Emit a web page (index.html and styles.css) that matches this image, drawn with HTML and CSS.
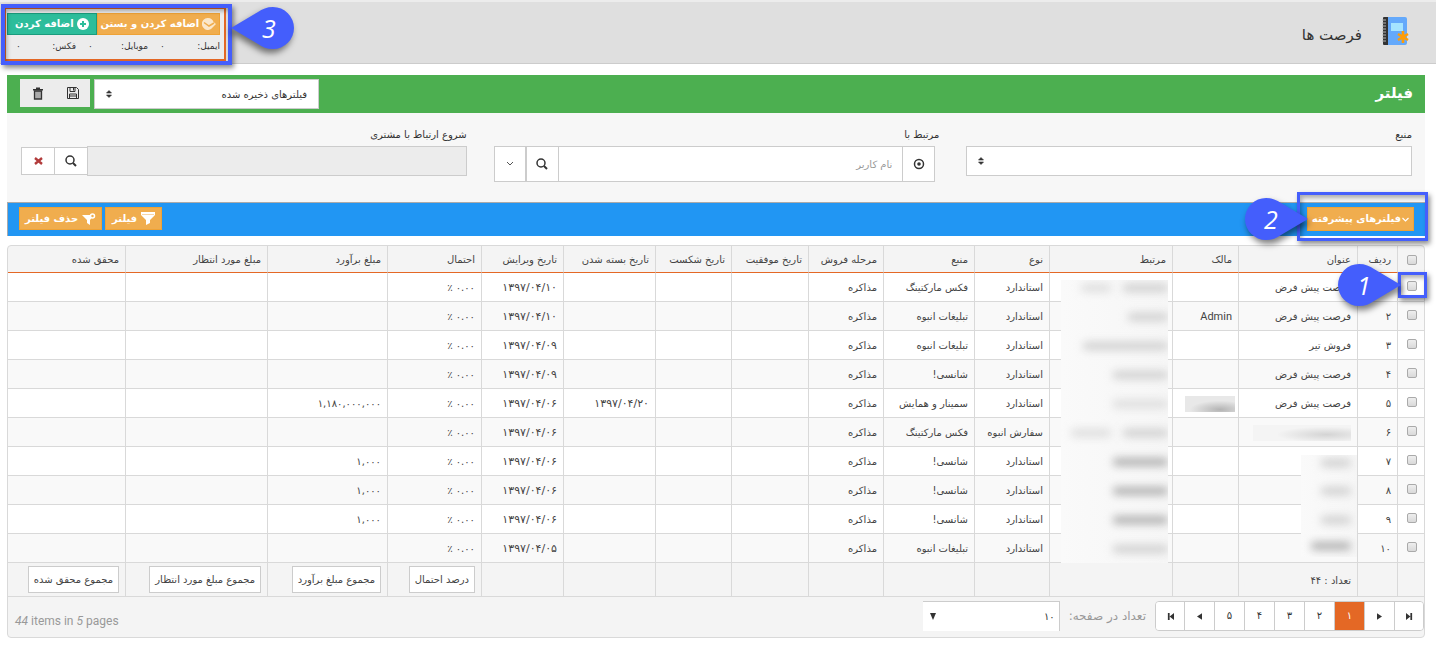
FILE: index.html
```html
<!DOCTYPE html>
<html lang="fa" dir="rtl">
<head>
<meta charset="utf-8">
<title>فرصت ها</title>
<link rel="stylesheet" href="styles.css">
</head>
<body>
<svg class="defs" width="0" height="0" aria-hidden="true">
  <symbol id="drop" viewBox="0 0 63 42"><path d="M63 21 36 5C32 2 27 0 21 0a21 21 0 0 0 0 42c6 0 11-2 15-5z"/></symbol>
  <symbol id="search" viewBox="0 0 12 12"><circle cx="5" cy="5" r="4" fill="none" stroke="currentColor" stroke-width="1.5"/><path d="m8 8 3 3" stroke="currentColor" stroke-width="2"/></symbol>
  <symbol id="sort" viewBox="0 0 8 10"><path d="M1.500 4h5L4 1.500zM1.500 6h5L4 8.500z" fill="currentColor" stroke="currentColor" stroke-width=".6" stroke-linejoin="round"/></symbol>
</svg>

<header class="top">
  <div class="brand">
    <svg class="book" viewBox="0 0 27 29" aria-hidden="true">
      <path d="M5 0h18a2 2 0 0 1 2 2v24a2 2 0 0 1-2 2H5z" fill="#64a9fb"/>
      <path d="M2 0h4v28H2a1 1 0 0 1-1-1V1a1 1 0 0 1 1-1z" fill="#333"/>
      <path d="M0 3h4M0 6h4M0 9h4M0 12h4M0 15h4M0 18h4M0 21h4M0 24h4" stroke="#b5b5b5"/>
      <path d="M9 6h12v8H9z" fill="#a5e4ff"/>
      <path d="M21 14v12M16 17l10 6M26 17l-10 6" stroke="#ff9c05" stroke-width="2.6"/>
    </svg>
    <h1 class="title">فرصت ها</h1>
  </div>
  <div class="quick">
    <div class="quick-buttons">
      <button class="btn amber" type="button"><svg width="14" height="12" viewBox="0 0 14 12" aria-hidden="true"><path d="M6 0c3 0 5 2 5.500 4L14 6l-5 5-1 .6A6 6 0 1 1 6 0z" fill="#fff" opacity=".7"/><path d="M2 4.500 7 8l5-3" stroke="#f0ad4e" stroke-width="1.500" fill="none"/></svg>اضافه کردن و بستن</button>
      <button class="btn teal" type="button"><svg width="12" height="12" viewBox="0 0 12 12" aria-hidden="true"><circle cx="6" cy="6" r="6" fill="#fff"/><path d="M6 3v6M3 6h6" stroke="#2dbd9b" stroke-width="2"/></svg>اضافه کردن</button>
    </div>
    <div class="quick-info"><span>ایمیل:<b>۰</b></span><span>موبایل:<b>۰</b></span><span>فکس:<b>۰</b></span></div>
    <div class="mark mark-3"></div>
    <div class="pin pin-3"><svg aria-hidden="true"><use href="#drop"/></svg><span>3</span></div>
  </div>
</header>

<main class="page">
  <section class="filter">
    <div class="filter-head">
      <h2>فیلتر</h2>
      <div class="saved">
        <div class="select-wrap"><select class="field" aria-label="فیلترهای ذخیره شده"><option>فیلترهای ذخیره شده</option></select><svg class="sort" aria-hidden="true"><use href="#sort"/></svg></div>
        <div class="tools">
          <button type="button" aria-label="ذخیره"><svg width="12" height="12" viewBox="0 0 12 12" fill="none" stroke="#333" aria-hidden="true"><path d="M.5.5h9l2 2v9H.5z"/><path d="M3 .5v4h5v-4M6.500 1v2.500M2.500 11.500V7h7v4.500M2.500 9h7"/></svg></button>
          <button type="button" aria-label="حذف"><svg width="12" height="13" viewBox="0 0 12 13" aria-hidden="true"><path d="M1 2h10v1.500H1zM4 .5h4V2H4z" fill="#333"/><path d="M2.500 4h7v8h-7z" fill="#aaa" stroke="#333" stroke-width="1.300"/></svg></button>
        </div>
      </div>
    </div>
    <div class="filter-body">
      <div class="cell">
        <label for="source">منبع</label>
        <div class="select-wrap"><select class="field" id="source"><option></option></select><svg class="sort" aria-hidden="true"><use href="#sort"/></svg></div>
      </div>
      <div class="cell">
        <label for="related">مرتبط با</label>
        <div class="group">
          <button type="button" aria-label="انتخاب"><svg width="12" height="12" viewBox="0 0 12 12" aria-hidden="true"><circle cx="6" cy="6" r="4.500" fill="none" stroke="#333" stroke-width="1.500"/><circle cx="6" cy="6" r="1.800" fill="#333"/></svg></button>
          <input id="related" type="text" placeholder="نام کاربر">
          <button type="button" aria-label="جستجو"><svg width="12" height="12" aria-hidden="true"><use href="#search"/></svg></button>
          <button class="split" type="button" aria-label="باز کردن"><svg width="8" height="6" viewBox="0 0 8 6" aria-hidden="true"><path d="m1 1 3 3 3-3" fill="none" stroke="#555"/></svg></button>
        </div>
      </div>
      <div class="cell">
        <label for="start">شروع ارتباط با مشتری</label>
        <div class="group low">
          <input id="start" type="text" disabled>
          <button type="button" aria-label="جستجو"><svg width="12" height="12" aria-hidden="true"><use href="#search"/></svg></button>
          <button type="button" aria-label="پاک کردن"><svg width="9" height="8" viewBox="0 0 9 8" aria-hidden="true"><path d="m1 1 7 6M8 1 1 7" stroke="#b23c3c" stroke-width="2.400"/></svg></button>
        </div>
      </div>
    </div>
    <div class="filter-foot">
      <div class="advanced">
        <button class="btn amber" type="button"><svg width="7" height="5" viewBox="0 0 7 5" aria-hidden="true"><path d="m.5 1 3 3 3-3" fill="none" stroke="#fff" stroke-width="1.200"/></svg>فیلترهای پیشرفته</button>
        <div class="mark mark-2"></div>
        <div class="pin pin-2"><svg aria-hidden="true"><use href="#drop"/></svg><span>2</span></div>
      </div>
      <div class="actions">
        <button class="btn amber" type="button"><svg width="14" height="13" viewBox="0 0 14 13" aria-hidden="true"><path d="M0 0h14v3L9 8v3l-4 2V8L0 3z" fill="#fff"/><path d="M1 2.500h12" stroke="#f0ad4e" stroke-width=".5"/></svg>فیلتر</button>
        <button class="btn amber" type="button"><svg width="14" height="12" viewBox="0 0 14 12" aria-hidden="true"><path d="M0 2h12L8 7v5l-3-2V7z" fill="#fff"/><circle cx="10.500" cy="3" r="2" fill="#f0ad4e" stroke="#fff" stroke-width="1.500"/></svg>حذف فیلتر</button>
      </div>
    </div>
  </section>

  <section class="grid">
    <table>
      <colgroup><col class="w27"><col class="w40"><col class="w119"><col class="w66"><col class="w123"><col class="w75"><col class="w91"><col class="w75"><col class="w77"><col class="w76"><col class="w92"><col class="w82"><col class="w94"><col class="w120"><col class="w142"><col class="w117"></colgroup>
      <thead><tr><th><input type="checkbox" aria-label="انتخاب همه"></th><th>ردیف</th><th>عنوان</th><th>مالک</th><th>مرتبط</th><th>نوع</th><th>منبع</th><th>مرحله فروش</th><th>تاریخ موفقیت</th><th>تاریخ شکست</th><th>تاریخ بسته شدن</th><th>تاریخ ویرایش</th><th>احتمال</th><th>مبلغ برآورد</th><th>مبلغ مورد انتظار</th><th>محقق شده</th></tr></thead>
      <tbody>
        <tr><td class="anchor"><input type="checkbox" aria-label="ردیف ۱"><div class="mark mark-1"></div><div class="pin pin-1"><svg aria-hidden="true"><use href="#drop"/></svg><span>1</span></div></td><td>۱</td><td>فرصت پیش فرض</td><td></td><td class="anchor"><div class="veil first"><i class="s45"></i><i class="s30 pale"></i></div></td><td>استاندارد</td><td>فکس مارکتینگ</td><td>مذاکره</td><td></td><td></td><td></td><td>۱۳۹۷/۰۴/۱۰</td><td>۰.۰۰ ٪</td><td></td><td></td><td></td></tr>
        <tr><td><input type="checkbox" aria-label="ردیف ۲"></td><td>۲</td><td>فرصت پیش فرض</td><td class="latin">Admin</td><td class="anchor"><div class="veil"><i class="s40"></i></div></td><td>استاندارد</td><td>تبلیغات انبوه</td><td>مذاکره</td><td></td><td></td><td></td><td>۱۳۹۷/۰۴/۱۰</td><td>۰.۰۰ ٪</td><td></td><td></td><td></td></tr>
        <tr><td><input type="checkbox" aria-label="ردیف ۳"></td><td>۳</td><td>فروش تیر</td><td></td><td class="anchor"><div class="veil"><i class="s85"></i></div></td><td>استاندارد</td><td>تبلیغات انبوه</td><td>مذاکره</td><td></td><td></td><td></td><td>۱۳۹۷/۰۴/۰۹</td><td>۰.۰۰ ٪</td><td></td><td></td><td></td></tr>
        <tr><td><input type="checkbox" aria-label="ردیف ۴"></td><td>۴</td><td>فرصت پیش فرض</td><td></td><td class="anchor"><div class="veil"><i class="s55"></i></div></td><td>استاندارد</td><td>شانسی!</td><td>مذاکره</td><td></td><td></td><td></td><td>۱۳۹۷/۰۴/۰۹</td><td>۰.۰۰ ٪</td><td></td><td></td><td></td></tr>
        <tr><td><input type="checkbox" aria-label="ردیف ۵"></td><td>۵</td><td>فرصت پیش فرض</td><td class="tight"><div class="patch owner"></div></td><td class="anchor"><div class="veil"><i class="s55 pale"></i></div></td><td>استاندارد</td><td>سمینار و همایش</td><td>مذاکره</td><td></td><td></td><td>۱۳۹۷/۰۴/۲۰</td><td>۱۳۹۷/۰۴/۰۶</td><td>۰.۰۰ ٪</td><td>۱,۱۸۰,۰۰۰,۰۰۰</td><td></td><td></td></tr>
        <tr><td><input type="checkbox" aria-label="ردیف ۶"></td><td>۶</td><td><div class="patch name"></div></td><td></td><td class="anchor"><div class="veil"><i class="s45"></i><i class="s40 pale"></i></div></td><td>سفارش انبوه</td><td>فکس مارکتینگ</td><td>مذاکره</td><td></td><td></td><td></td><td>۱۳۹۷/۰۴/۰۶</td><td>۰.۰۰ ٪</td><td></td><td></td><td></td></tr>
        <tr><td><input type="checkbox" aria-label="ردیف ۷"></td><td>۷</td><td class="anchor"><div class="veil short first"><i class="s30"></i></div></td><td></td><td class="anchor"><div class="veil"><i class="s55 dark"></i></div></td><td>استاندارد</td><td>شانسی!</td><td>مذاکره</td><td></td><td></td><td></td><td>۱۳۹۷/۰۴/۰۶</td><td>۰.۰۰ ٪</td><td>۱,۰۰۰</td><td></td><td></td></tr>
        <tr><td><input type="checkbox" aria-label="ردیف ۸"></td><td>۸</td><td class="anchor"><div class="veil short"><i class="s30"></i></div></td><td></td><td class="anchor"><div class="veil"><i class="s55 dark"></i></div></td><td>استاندارد</td><td>شانسی!</td><td>مذاکره</td><td></td><td></td><td></td><td>۱۳۹۷/۰۴/۰۶</td><td>۰.۰۰ ٪</td><td>۱,۰۰۰</td><td></td><td></td></tr>
        <tr><td><input type="checkbox" aria-label="ردیف ۹"></td><td>۹</td><td class="anchor"><div class="veil short"><i class="s30"></i></div></td><td></td><td class="anchor"><div class="veil"><i class="s55 dark"></i></div></td><td>استاندارد</td><td>شانسی!</td><td>مذاکره</td><td></td><td></td><td></td><td>۱۳۹۷/۰۴/۰۶</td><td>۰.۰۰ ٪</td><td>۱,۰۰۰</td><td></td><td></td></tr>
        <tr><td><input type="checkbox" aria-label="ردیف ۱۰"></td><td>۱۰</td><td class="anchor"><div class="veil short last"><i class="s40 dark"></i></div></td><td></td><td class="anchor"><div class="veil"><i class="s55"></i></div></td><td>استاندارد</td><td>تبلیغات انبوه</td><td>مذاکره</td><td></td><td></td><td></td><td>۱۳۹۷/۰۴/۰۵</td><td>۰.۰۰ ٪</td><td></td><td></td><td></td></tr>
      </tbody>
      <tfoot><tr><td></td><td></td><td>تعداد : ۴۴</td><td></td><td></td><td></td><td></td><td></td><td></td><td></td><td></td><td></td><td><button type="button">درصد احتمال</button></td><td><button type="button">مجموع مبلغ برآورد</button></td><td><button type="button">مجموع مبلغ مورد انتظار</button></td><td><button type="button">مجموع محقق شده</button></td></tr></tfoot>
    </table>
    <div class="pager">
      <nav class="pages" aria-label="صفحه‌ها">
        <button type="button" aria-label="آخرین صفحه"><svg width="7" height="7" viewBox="0 0 8 8" aria-hidden="true"><path d="M0 0l5 4-5 4zM5 0h2v8H5z" fill="#333"/></svg></button>
        <button type="button" aria-label="صفحه بعد"><svg width="5" height="7" viewBox="0 0 6 8" aria-hidden="true"><path d="M0 0l6 4-6 4z" fill="#333"/></svg></button>
        <button class="current" type="button">۱</button>
        <button type="button">۲</button>
        <button type="button">۳</button>
        <button type="button">۴</button>
        <button type="button">۵</button>
        <button type="button" aria-label="صفحه قبل"><svg width="5" height="7" viewBox="0 0 6 8" aria-hidden="true"><path d="M6 0 0 4l6 4z" fill="#333"/></svg></button>
        <button type="button" aria-label="اولین صفحه"><svg width="7" height="7" viewBox="0 0 8 8" aria-hidden="true"><path d="M8 0 3 4l5 4zM1 0h2v8H1z" fill="#333"/></svg></button>
      </nav>
      <label class="per-label" for="per">تعداد در صفحه:</label>
      <div class="per"><select id="per"><option>۱۰</option></select><svg width="6" height="7" viewBox="0 0 6 7" aria-hidden="true"><path d="M0 0h6L3 7z" fill="#333"/></svg></div>
      <p class="summary" dir="ltr"><em>44</em> items in <em>5</em> pages</p>
    </div>
  </section>
</main>
</body>
</html>
```

FILE: styles.css
```css
* { box-sizing: border-box; }

body {
  margin: 0;
  background: #fff;
  color: #333;
  font-family: "DejaVu Sans", sans-serif;
  font-size: 10px;
  line-height: 16px;
}

.defs { position: absolute; }

button, input, select { margin: 0; font: inherit; color: inherit; border-radius: 0; }

button {
  display: inline-flex;
  align-items: center;
  justify-content: center;
  padding: 0;
  border: 0;
  background: #fff;
  cursor: pointer;
}

h1, h2, p { margin: 0; font-weight: normal; }

/* Header */
.top {
  display: flex;
  justify-content: space-between;
  align-items: flex-start;
  min-height: 64px;
  padding: 5px 27px 0 4px;
  border-top: 2px solid #ececec;
  border-bottom: 1px solid #ccc;
  background: #dfdfdf;
}

.brand { display: flex; align-items: center; gap: 20px; padding-top: 8px; }
.book { width: 27px; height: 29px; }
.title { padding-top: 8px; font-size: 15px; line-height: 24px; }

.quick {
  position: relative;
  width: 222px;
  padding: 4px 4px 0 1px;
  border: 2px solid #e46825;
  background: #ececec;
}

.quick-buttons { display: flex; }
.quick-buttons .btn { gap: 3px; padding: 0 2px; }
.quick-buttons .amber { flex: 7; }
.quick-buttons .teal { flex: 5; }

.btn {
  gap: 4px;
  height: 22px;
  padding: 0 5px;
  border: 1px solid #eea236;
  background: #f0ad4e;
  color: #fff;
  font-weight: bold;
  white-space: nowrap;
}
.btn.teal { border-color: #1a9c7d; background: #2dbd9b; }

.quick-info { display: flex; justify-content: space-between; gap: 12px; padding: 3px 0 5px 9px; font-size: 9px; }
.quick-info span { display: flex; flex: 1; justify-content: space-between; }
.quick-info b { font-weight: normal; }

/* Numbered callouts */
.mark {
  position: absolute;
  z-index: 2;
  border: 4px solid #445efc;
  box-shadow: 2px 3px 5px rgba(0, 0, 0, .45), inset 2px 3px 4px rgba(0, 0, 0, .3);
  pointer-events: none;
}
.mark-1 { inset: -1px -3px 3px 0; border-width: 3px; }
.mark-2 { inset: -15px -14px -10px -10px; border-width: 3px; }
.mark-3 { inset: -5px -8px -6px -5px; }

.pin {
  position: absolute;
  z-index: 3;
  width: 63px;
  height: 42px;
  color: #fff;
  font: italic 25px/42px "Open Sans", sans-serif;
  text-align: center;
  pointer-events: none;
}
.pin svg {
  position: absolute;
  inset: 0;
  width: 63px;
  height: 42px;
  fill: #445efc;
  filter: drop-shadow(2px 4px 3px rgba(0, 0, 0, .5));
}
.pin span { position: absolute; top: 0; left: 0; width: 52px; }
.pin-1 { right: 23px; top: -9px; }
.pin-2 { right: 106px; top: -9px; }
.pin-3 { left: 225px; top: -2px; }
.pin-3 svg { transform: scaleX(-1); }
.pin-3 span { right: 0; left: auto; width: 50px; }

/* Filter panel */
.page { padding: 11px 11px 0 7px; }

.filter-head {
  display: flex;
  justify-content: space-between;
  padding: 4px 12px 4px 13px;
  background: #4caf50;
}
.filter-head h2 { padding-top: 2px; color: #fff; font-size: 15px; font-weight: bold; line-height: 24px; }

.saved { display: flex; align-items: flex-start; gap: 4px; }
.saved .select-wrap { width: 225px; }

.select-wrap { position: relative; }
.field {
  display: block;
  width: 100%;
  height: 30px;
  padding: 1px 11px 0;
  border: 1px solid #ccc;
  background: #fff;
  appearance: none;
}
.sort { position: absolute; top: 10px; left: 11px; width: 8px; height: 10px; }

.tools { display: flex; background: #ececec; }
.tools button { width: 35px; height: 28px; background: none; }

.filter-body { display: grid; grid-template-columns: repeat(3, 1fr); min-height: 89px; background: #f7f7f7; }
.cell { padding: 14px 13px 0 14px; }
.cell label { display: block; padding-bottom: 3px; }

.group { display: flex; margin-right: 4px; }
.group input { flex: 1; min-width: 0; height: 36px; padding: 0 10px; border: 1px solid #ccc; background: #fff; }
.group input::placeholder { color: #999; opacity: 1; }
.group button { width: 32px; border: 1px solid #ccc; }
.group button:first-child { border-left: 0; }
.group input + button { border-right: 0; }
.group.low { align-items: flex-start; margin-right: 0; }
.group.low input { height: 30px; background: #ececec; }
.group.low button { width: 33px; height: 28px; margin-top: 1px; }
.group.low button:last-child { border-right: 0; }

.filter-foot {
  display: flex;
  justify-content: space-between;
  padding: 4px 11px 5px;
  border: solid #aaa;
  border-width: 1px 0 0 1px;
  background: #2196f3;
}
.advanced { position: relative; display: flex; }
.advanced .btn { width: 107px; height: 24px; gap: 1px; padding: 0; }
.actions { display: flex; gap: 3px; }
.actions .btn { min-width: 57px; height: 23px; }

/* Grid */
.grid { margin-top: 9px; border: 1px solid #d9d9d9; border-radius: 4px; background: #f4f4f4; }

table { width: 100%; border-spacing: 0; table-layout: fixed; color: #444; }
.w27 { width: 27px; } .w40 { width: 40px; } .w119 { width: 119px; } .w66 { width: 66px; }
.w123 { width: 123px; } .w75 { width: 75px; } .w91 { width: 91px; } .w77 { width: 77px; }
.w76 { width: 76px; } .w92 { width: 92px; } .w82 { width: 82px; } .w94 { width: 94px; }
.w120 { width: 120px; } .w142 { width: 142px; } .w117 { width: 117px; }

th, td {
  height: 29px;
  padding: 2px 6px 0;
  border: solid #d9d9d9;
  border-width: 0 0 1px 1px;
  font-weight: normal;
  text-align: right;
  white-space: nowrap;
}
th { height: 27px; border-bottom-color: #e46825; }
th:last-child, td:last-child { border-left-width: 0; }
tbody tr { background: #fff; }
tbody tr:nth-child(even) { background: #f9f9f9; }
tbody td:nth-child(11), tbody td:nth-child(12) { font-size: 11px; }
.latin { font-family: Roboto, sans-serif; font-size: 11px; }
.anchor { position: relative; }

input[type="checkbox"] {
  display: block;
  width: 10px;
  height: 10px;
  margin: 0 1px 4px;
  border: 1px solid #aaa;
  border-radius: 2px;
  background: linear-gradient(#eee, #d9d9d9);
  appearance: none;
}
th input[type="checkbox"] { margin-bottom: 1px; }

tfoot td { height: 34px; }
tfoot td button { height: 27px; padding: 0 5px; border: 1px solid #ccc; vertical-align: middle; }
tfoot td:has(button) { padding-top: 0; }

/* Blurred-out values */
.veil {
  position: absolute;
  inset: 0 4px -1px 11px;
  display: flex;
  align-items: center;
  gap: 12px;
  overflow: hidden;
  background: linear-gradient(90deg, #fafafa, #f6f6f6);
}
.veil.first { top: 7px; padding-bottom: 6px; }
.veil.short { inset: 0 0 -1px 62px; padding-right: 6px; }
.veil.short.first { top: 8px; }
.veil.short.last { bottom: 5px; }
.veil i { height: 8px; border-radius: 4px; background: #d0d0d0; filter: blur(4px); }
.veil .pale { background: #ddd; }
.veil .dark { background: #b0b0b0; }
.s30 { width: 30px; } .s40 { width: 40px; } .s45 { width: 45px; } .s55 { width: 55px; } .s85 { width: 85px; }

.patch { height: 16px; }
.tight { padding-right: 3px; }
.owner { width: 50px; background: radial-gradient(30px 9px at 70% 85%, #b4b4b4, #e8e8e8); }
.name { width: 98px; background: radial-gradient(50px 8px at 75% 60%, #d4d4d4, #f4f4f4); }

/* Pager */
.pager { display: flex; align-items: center; padding: 4px 0 6px 7px; }
.pages { display: flex; border: 1px solid #ccc; border-radius: 4px; overflow: hidden; }
.pages button { width: 30px; height: 28px; border-left: 1px solid #ccc; }
.pages button:first-child { width: 29px; }
.pages button:last-child { width: 28px; border-left: 0; }
.pages .current { background: #e46825; color: #fff; }
.per-label { margin: 0 9px; color: #999; font-size: 12px; }
.per { position: relative; width: 137px; }
.per select { display: block; width: 100%; height: 30px; padding: 0 4px; border: solid #ccc; border-width: 1px 1px 0 0; background: #fff; appearance: none; }
.per svg { position: absolute; top: 12px; left: 7px; }
.summary { margin-right: auto; padding-top: 10px; color: #999; font-family: Roboto, sans-serif; font-size: 12px; }
```
